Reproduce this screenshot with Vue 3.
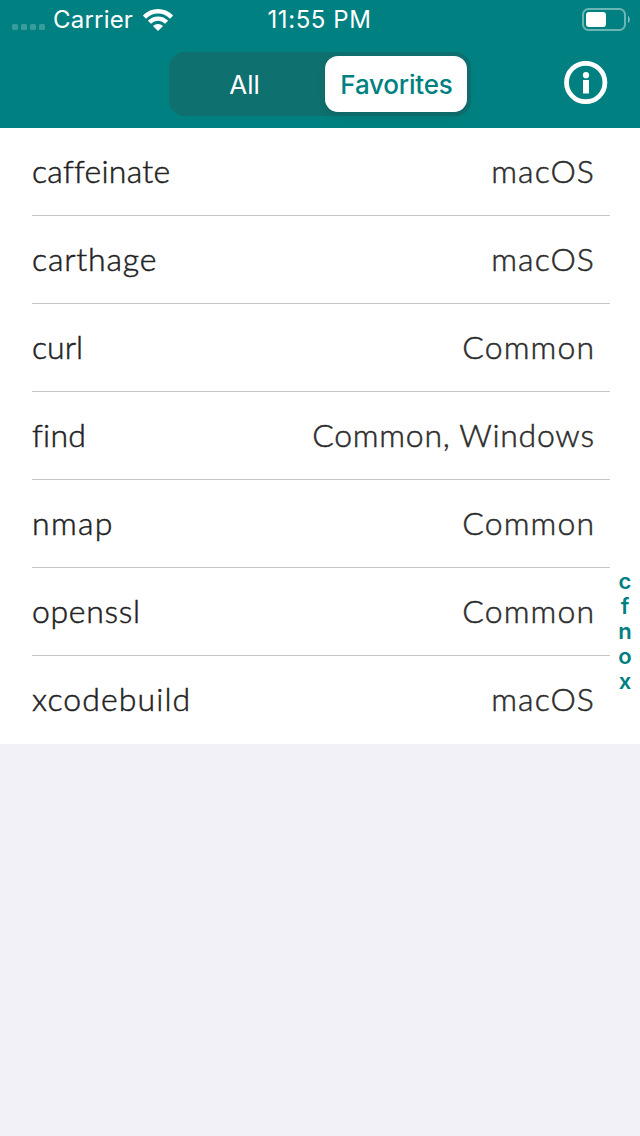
<script setup>
const commands = [
  { name: 'caffeinate', platform: 'macOS', ns: 0.25, ps: 1.1 },
  { name: 'carthage', platform: 'macOS', ns: 0.8, ps: 1.1 },
  { name: 'curl', platform: 'Common', ns: 0, ps: 1.1 },
  { name: 'find', platform: 'Common, Windows', ns: 0.2, ps: 0.72 },
  { name: 'nmap', platform: 'Common', ns: 1.3, ps: 1.1 },
  { name: 'openssl', platform: 'Common', ns: 0.65, ps: 1.1 },
  { name: 'xcodebuild', platform: 'macOS', ns: 1.1, ps: 1.1 },
]
const letters = ['c', 'f', 'n', 'o', 'x']
</script>

<template>
  <main class="screen">
    <header class="header">
      <div class="status">
        <div class="carrier">
          <span class="dots"><i v-for="n in 4" :key="n"></i></span>
          <span class="carrier-name">Carrier</span>
          <svg class="wifi" width="30" height="22" viewBox="0 0 30 22">
            <g fill="none" stroke="#fff" stroke-width="4.4">
              <path d="M1.4 8.2C9.2 0.3 20.8 0.3 28.6 8.2" />
              <path d="M6.4 13.3C11.3 8.4 18.7 8.4 23.6 13.3" />
            </g>
            <path d="M9.9 16.9C12.8 14.2 17.2 14.2 20.1 16.9L15 22Z" fill="#fff" />
          </svg>
        </div>
        <span class="time">11:55 PM</span>
        <svg class="battery" width="49" height="24" viewBox="0 0 49 24">
          <rect x="1" y="1" width="42" height="21" rx="5.5" fill="none" stroke="#fff" stroke-opacity=".42" stroke-width="2" />
          <rect x="4" y="4" width="20" height="15" rx="3" fill="#fff" />
          <path d="M46 8C48.3 9 48.3 14 46 15Z" fill="#fff" fill-opacity=".5" />
        </svg>
      </div>
      <nav class="nav">
        <div class="segments">
          <button class="segment">All</button>
          <button class="segment active">Favorites</button>
        </div>
        <svg class="info" width="44" height="44" viewBox="0 0 44 44">
          <circle cx="21.7" cy="21.5" r="19.2" fill="none" stroke="#fff" stroke-width="4.8" />
          <circle cx="22" cy="14.2" r="3.1" fill="#fff" />
          <path d="M19 19h6V32.5h-6z" fill="#fff" />
        </svg>
      </nav>
    </header>

    <section class="body">
      <ul class="list">
        <li v-for="c in commands" :key="c.name" class="row">
          <span class="name" :style="{ letterSpacing: c.ns + 'px' }">{{ c.name }}</span>
          <span class="platform" :style="{ letterSpacing: c.ps + 'px', marginRight: -c.ps + 'px' }">{{ c.platform }}</span>
        </li>
      </ul>
      <aside class="index">
        <span v-for="l in letters" :key="l">{{ l }}</span>
      </aside>
    </section>
  </main>
</template>

<style>
body {
  background: #f2f1f7;
}
</style>

<style scoped>
.screen {
  width: 640px;
  height: 1136px;
  overflow: hidden;
  background: #f2f1f7;
  font-family: Inter, "Liberation Sans", sans-serif;
}
.header {
  height: 128px;
  background: #008080;
  color: #fff;
}
.status {
  height: 40px;
  display: grid;
  grid-template-columns: 1fr auto 1fr;
  align-items: center;
  font-size: 24px;
  line-height: 40px;
}
.carrier {
  display: flex;
  align-items: center;
  padding-left: 12px;
}
.dots {
  display: flex;
  gap: 3px;
  margin-top: 14px;
}
.dots i {
  width: 6px;
  height: 6px;
  border-radius: 1.5px;
  background: rgba(255, 255, 255, 0.22);
}
.carrier-name {
  margin-left: 8px;
  width: 89.5px;
  letter-spacing: 0.2px;
}
.wifi {
  margin-top: -1px;
}
.time {
  margin-right: 1px;
  letter-spacing: 0.6px;
}
.battery {
  justify-self: end;
  margin-right: 9px;
}
.nav {
  height: 88px;
  display: flex;
  justify-content: space-between;
  padding: 12px 32px 0 169px;
  box-sizing: border-box;
}
.segments {
  display: flex;
  box-sizing: border-box;
  width: 302px;
  height: 64px;
  padding: 4px;
  border-radius: 16px;
  background: #0f7070;
}
.segment {
  width: 142px;
  margin: 0;
  padding: 0 0 0 1px;
  border: 0;
  border-radius: 13px;
  background: none;
  color: #fff;
  font-family: inherit;
  font-size: 26px;
}
.segment.active {
  margin-left: 10px;
  background: #fff;
  color: #008080;
  font-weight: 500;
  letter-spacing: -0.2px;
  box-shadow: 0 3px 8px rgba(0, 0, 0, 0.1);
}
.info {
  margin-top: 9px;
}
.body {
  display: grid;
  grid-template-columns: 610px 30px;
  height: 616px;
  background: #fff;
}
.list {
  margin: 0;
  padding: 0 0 0 32px;
  list-style: none;
}
.row {
  display: flex;
  justify-content: space-between;
  box-sizing: border-box;
  height: 88px;
  padding-right: 16px;
  border-bottom: 1px solid #c6c6c8;
  font-family: Lato, "Liberation Sans", sans-serif;
  font-size: 32px;
  font-weight: 300;
  line-height: 85px;
  color: #222;
  -webkit-text-stroke: 0.5px currentColor;
  white-space: nowrap;
}
.row:last-child {
  border-bottom-color: transparent;
}
.platform {
  color: #2c2c2c;
}
.index {
  display: flex;
  flex-direction: column;
  align-items: center;
  padding-top: 441px;
  color: #008080;
  font-size: 22px;
  font-weight: 600;
  line-height: 25px;
}
</style>
